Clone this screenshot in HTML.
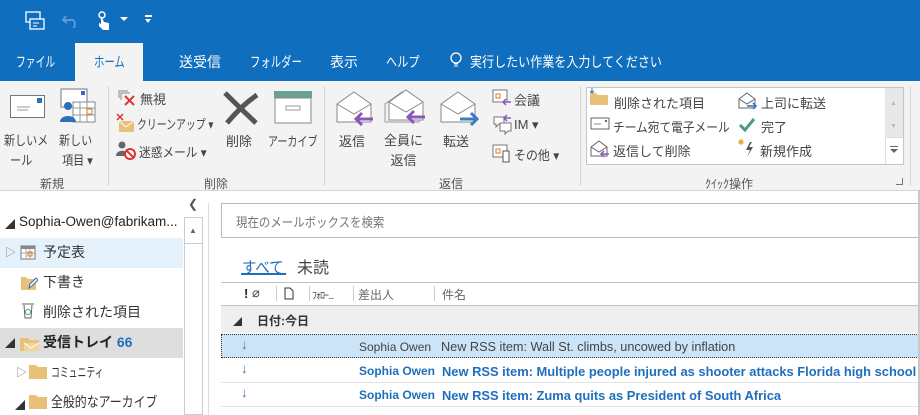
<!DOCTYPE html>
<html><head><meta charset="utf-8">
<style>
*{margin:0;padding:0;box-sizing:border-box}
body{width:920px;height:415px;overflow:hidden;background:#fff;font-family:"Liberation Sans","Noto Sans CJK JP",sans-serif;position:relative;color:#444}
.a{position:absolute;white-space:nowrap;transform-origin:0 0}
.t{font-size:13px;color:#444}
.w{color:#fff;font-size:14px}
.lbl{font-size:12px;color:#555}
.sep{position:absolute;width:1px;background:#d6d6d6}
</style></head><body>
<div class="a" style="left:0;top:0;width:920px;height:81px;background:#106ebe"></div>
<!-- QAT -->
<svg class="a" style="left:24px;top:10px" width="22" height="22" viewBox="0 0 22 22"><rect x="2" y="2" width="14" height="10" fill="none" stroke="#fff" stroke-width="1.3"/><rect x="6" y="9" width="14" height="10" fill="#106ebe" stroke="#fff" stroke-width="1.3"/><path d="M9 13h6M9 16h4" stroke="#fff"/></svg>
<svg class="a" style="left:62px;top:12px" width="18" height="16"><path d="M4 4 L1 8 L5 11 M1 8 H11 a5 5 0 0 1 0 8" fill="none" stroke="#5a9ad6" stroke-width="2"/></svg>
<svg class="a" style="left:96px;top:10px" width="16" height="22"><circle cx="6" cy="5" r="3" fill="none" stroke="#fff" stroke-width="1.5"/><path d="M5 6v8l-2-1v3l4 4h6v-7l-5-1" fill="#fff"/></svg>
<div class="a" style="left:120px;top:17px;border:4px solid transparent;border-top:4px solid #fff"></div>
<div class="a" style="left:145px;top:15px;width:7px;height:1.5px;background:#fff"></div>
<div class="a" style="left:145px;top:19px;border:3.5px solid transparent;border-top:4px solid #fff"></div>
<!-- tabs -->
<div class="a w" style="left:16px;top:52px;transform:scaleX(0.7)">ファイル</div>
<div class="a" style="left:75px;top:43px;width:68px;height:38px;background:#f3f3f3"></div>
<div class="a" style="left:94px;top:52px;font-size:14px;color:#106ebe;transform:scaleX(0.74)">ホーム</div>
<div class="a w" style="left:179px;top:52px">送受信</div>
<div class="a w" style="left:250px;top:52px;transform:scaleX(0.74)">フォルダー</div>
<div class="a w" style="left:330px;top:52px">表示</div>
<div class="a w" style="left:386px;top:52px;transform:scaleX(0.8)">ヘルプ</div>
<svg class="a" style="left:449px;top:51px" width="14" height="20"><circle cx="7" cy="7" r="5" fill="none" stroke="#fff" stroke-width="1.3"/><path d="M5 13h4M5 15h4" stroke="#fff"/></svg>
<div class="a w" style="left:470px;top:52px;transform:scaleX(0.86)">実行したい作業を入力してください</div>
<!-- ribbon -->
<div class="a" style="left:0;top:81px;width:920px;height:110px;background:#f3f3f3;border-bottom:1px solid #d6d6d6"></div>
<!-- 新規 -->
<svg class="a" style="left:10px;top:95px" width="36" height="24"><rect x="0.5" y="0.5" width="34" height="22" fill="#fff" stroke="#777"/><rect x="27" y="3" width="5" height="5" fill="#2e6fba"/><path d="M7 12h13M7 15h11" stroke="#999"/></svg>
<div class="a t" style="left:4px;top:131px;line-height:20px;transform:scaleX(0.85)">新しいメ<br>&nbsp;&nbsp;ール</div>
<svg class="a" style="left:59px;top:88px" width="38" height="36"><rect x="2" y="1" width="26" height="18" fill="#fff" stroke="#777"/><rect x="22" y="3" width="4" height="4" fill="#2e6fba"/><rect x="14" y="14" width="22" height="20" fill="#fff" stroke="#888"/><path d="M14 20h22M14 27h22M21 14v20M28 14v20" stroke="#999"/><rect x="28" y="21" width="5" height="5" fill="none" stroke="#e07a1f"/><circle cx="9" cy="18" r="4" fill="#2e6fba"/><path d="M1 34c0-8 16-8 16 0z" fill="#2e6fba"/></svg>
<div class="a t" style="left:59px;top:131px;line-height:20px;transform:scaleX(0.85)">新しい<br>&nbsp;項目 ▾</div>
<div class="a lbl" style="left:40px;top:175px">新規</div>
<div class="sep" style="left:108px;top:86px;height:100px"></div>
<!-- 削除 -->
<svg class="a" style="left:117px;top:88px" width="20" height="18"><path d="M2 10V3h9M4 12V5h9" fill="none" stroke="#888"/><path d="M8 8l9 9M17 8l-9 9" stroke="#d33" stroke-width="2"/></svg>
<div class="a t" style="left:140px;top:89px">無視</div>
<svg class="a" style="left:116px;top:113px" width="20" height="20"><rect x="3" y="8" width="15" height="11" fill="#e8c07a"/><path d="M3 8l7 6 8-6" fill="none" stroke="#fff"/><path d="M1 1l6 6M7 1l-6 6" stroke="#d33" stroke-width="1.5"/></svg>
<div class="a t" style="left:137px;top:114px;transform:scaleX(0.76)">クリーンアップ ▾</div>
<svg class="a" style="left:116px;top:140px" width="20" height="20"><circle cx="6" cy="5" r="3.5" fill="#666"/><path d="M0 16c0-7 12-7 12 0z" fill="#666"/><circle cx="14" cy="14" r="5" fill="#fff" stroke="#d33" stroke-width="2"/><path d="M11 11l6 6" stroke="#d33" stroke-width="2"/></svg>
<div class="a t" style="left:139px;top:142px;transform:scaleX(0.9)">迷惑メール ▾</div>
<svg class="a" style="left:222px;top:90px" width="38" height="36"><path d="M3 3 Q18 18 34 33" stroke="#555" stroke-width="5" fill="none"/><path d="M35 5 Q20 15 5 33" stroke="#555" stroke-width="5" fill="none"/></svg>
<div class="a t" style="left:226px;top:131px">削除</div>
<svg class="a" style="left:273px;top:90px" width="40" height="34"><rect x="1" y="1" width="38" height="7" fill="#6aa38d"/><rect x="2" y="8" width="36" height="25" fill="#fff" stroke="#888"/><rect x="13" y="16" width="14" height="4" fill="none" stroke="#999"/></svg>
<div class="a t" style="left:268px;top:131px;transform:scaleX(0.77)">アーカイブ</div>
<div class="a lbl" style="left:204px;top:175px">削除</div>
<div class="sep" style="left:324px;top:86px;height:100px"></div>
<!-- 返信 -->
<svg class="a" style="left:336px;top:90px" width="40" height="36"><path d="M1 14 L18 2 L35 14 V32 H1Z" fill="#fff" stroke="#888"/><path d="M1 14 L18 24 L35 14" fill="none" stroke="#888"/><path d="M20 29h17M26 23l-6 6 6 6" stroke="#8b58b8" stroke-width="3" fill="none"/></svg>
<div class="a t" style="left:339px;top:131px">返信</div>
<svg class="a" style="left:384px;top:88px" width="42" height="38"><path d="M1 16 L18 4 L35 16 V34 H1Z" fill="none" stroke="#999"/><path d="M5 14 L22 2 L39 14 V32 H5Z" fill="#fff" stroke="#888"/><path d="M5 14 L22 24 L39 14" fill="none" stroke="#888"/><path d="M24 29h17M30 23l-6 6 6 6" stroke="#8b58b8" stroke-width="3" fill="none"/></svg>
<div class="a t" style="left:384px;top:131px;line-height:20px;text-align:center">全員に<br>返信</div>
<svg class="a" style="left:440px;top:90px" width="40" height="36"><path d="M1 14 L18 2 L35 14 V32 H1Z" fill="#fff" stroke="#888"/><path d="M1 14 L18 24 L35 14" fill="none" stroke="#888"/><path d="M20 29h17M31 23l6 6-6 6" stroke="#3d7cc4" stroke-width="3" fill="none"/></svg>
<div class="a t" style="left:443px;top:131px">転送</div>
<svg class="a" style="left:492px;top:89px" width="20" height="18"><rect x="1" y="1" width="14" height="12" fill="#fff" stroke="#777"/><rect x="4" y="5" width="4" height="4" fill="none" stroke="#e07a1f"/><path d="M19 13h-8M14 10l-3 3 3 3" stroke="#8b58b8" stroke-width="1.5" fill="none"/></svg>
<div class="a t" style="left:514px;top:90px">会議</div>
<svg class="a" style="left:492px;top:114px" width="22" height="22"><path d="M2 3h10v7H7l-3 3v-3H2z" fill="#fff" stroke="#777"/><path d="M8 9h11v8h-3l-3 3v-3H8z" fill="#fff" stroke="#777"/><path d="M19 4h-7M15 1l-3 3 3 3" stroke="#8b58b8" stroke-width="1.5" fill="none"/></svg>
<div class="a t" style="left:514px;top:117px">IM ▾</div>
<svg class="a" style="left:492px;top:144px" width="20" height="20"><rect x="1" y="1" width="14" height="12" fill="#fff" stroke="#777"/><rect x="4" y="5" width="4" height="4" fill="none" stroke="#e07a1f"/><rect x="11" y="7" width="6" height="11" fill="#fff" stroke="#555"/></svg>
<div class="a t" style="left:514px;top:145px;transform:scaleX(0.92)">その他 ▾</div>
<div class="a lbl" style="left:439px;top:175px">返信</div>
<div class="sep" style="left:580px;top:86px;height:100px"></div>
<!-- クイック操作 -->
<div class="a" style="left:586px;top:87px;width:318px;height:78px;background:#fff;border:1px solid #c6c6c6"></div>
<div class="a" style="left:885px;top:88px;width:18px;height:76px;background:#fff;border-left:1px solid #ddd"></div>
<div class="a" style="left:885px;top:88px;width:18px;height:50px;background:#e8e8e8;border-bottom:1px solid #ddd"></div>
<div class="a" style="left:890px;top:100px;font-size:7px;color:#bbb">▲</div>
<div class="a" style="left:890px;top:123px;font-size:7px;color:#bbb">▼</div>
<div class="a" style="left:890px;top:146px;width:8px;height:1px;background:#666"></div>
<div class="a" style="left:890px;top:149px;border:4px solid transparent;border-top:4px solid #666"></div>
<svg class="a" style="left:589px;top:88px" width="20" height="18"><path d="M1 5h6l2 2h10v10H1z" fill="#e8c07a"/><path d="M3 0v4M1 3l2 2 2-2" stroke="#2e6fba" fill="none"/></svg>
<div class="a t" style="left:614px;top:93px">削除された項目</div>
<svg class="a" style="left:590px;top:117px" width="20" height="14"><rect x="1" y="1" width="18" height="11" fill="#fff" stroke="#666"/><rect x="15" y="3" width="2" height="2" fill="#2e6fba"/><path d="M4 7h7" stroke="#888"/></svg>
<div class="a t" style="left:613px;top:117px;transform:scaleX(0.9)">チーム宛て電子メール</div>
<svg class="a" style="left:590px;top:140px" width="20" height="18"><path d="M1 7 L9 1 L17 7 V16 H1Z" fill="#fff" stroke="#666"/><path d="M1 7 L9 12 L17 7" fill="none" stroke="#666"/><path d="M11 14h8M14 11l-3 3 3 3" stroke="#8b58b8" stroke-width="1.5" fill="none"/></svg>
<div class="a t" style="left:613px;top:141px">返信して削除</div>
<svg class="a" style="left:738px;top:92px" width="20" height="18"><path d="M1 7 L9 1 L17 7 V16 H1Z" fill="#fff" stroke="#666"/><path d="M1 7 L9 12 L17 7" fill="none" stroke="#666"/><path d="M9 14h9M15 11l3 3-3 3" stroke="#2e6fba" stroke-width="1.5" fill="none"/></svg>
<div class="a t" style="left:761px;top:93px">上司に転送</div>
<svg class="a" style="left:738px;top:117px" width="18" height="16"><path d="M2 8l5 5 9-11" stroke="#4e9a8a" stroke-width="3" fill="none"/></svg>
<div class="a t" style="left:761px;top:117px">完了</div>
<svg class="a" style="left:738px;top:138px" width="18" height="20"><path d="M3 1v6M0 4h6M1 2l4 4M5 2l-4 4" stroke="#e8a03a"/><path d="M12 4l-4 8h4l-3 7 6-10h-4l3-5z" fill="#555"/></svg>
<div class="a t" style="left:760px;top:141px">新規作成</div>
<div class="a lbl" style="left:705px;top:175px">ｸｲｯｸ操作</div>
<div class="a" style="left:896px;top:178px;width:7px;height:7px;border-right:1px solid #777;border-bottom:1px solid #777"></div>
<div class="sep" style="left:910px;top:86px;height:100px"></div>
<!-- nav pane -->
<div class="a" style="left:188px;top:197px;font-size:12px;color:#555">❮</div>
<div class="a" style="left:184px;top:217px;width:19px;height:198px;border:1px solid #ccc;background:#fff"></div>
<div class="a" style="left:185px;top:218px;width:17px;height:26px;border-bottom:1px solid #ccc"></div>
<div class="a" style="left:189px;top:226px;font-size:8px;color:#666">▲</div>
<div class="a" style="left:208px;top:203px;width:1px;height:212px;background:#ddd"></div>
<div class="a" style="left:5px;top:216px;font-size:10px;color:#333">◢</div>
<div class="a" style="left:19px;top:214px;font-size:13.5px;color:#222">Sophia-Owen@fabrikam...</div>
<div class="a" style="left:0;top:238px;width:183px;height:30px;background:#e5f1fb"></div>
<div class="a" style="left:5px;top:244px;font-size:11px;color:#888">▷</div>
<svg class="a" style="left:20px;top:245px" width="16" height="16"><rect x="1" y="1" width="14" height="13" fill="#fff" stroke="#777"/><rect x="1" y="1" width="14" height="3" fill="#888"/><path d="M1 8h14M6 4v10M10 4v10" stroke="#aaa"/><rect x="8" y="7" width="4" height="4" fill="none" stroke="#e07a1f"/></svg>
<div class="a" style="left:43px;top:242px;font-size:14px;color:#333">予定表</div>
<svg class="a" style="left:20px;top:273px" width="18" height="18"><path d="M1 4h5l2 2h8v11H1z" fill="#e8c07a"/><path d="M9 15l1-4 6-6 2 2-6 6z" fill="#fff" stroke="#2e6fba"/></svg>
<div class="a" style="left:43px;top:272px;font-size:14px;color:#333">下書き</div>
<svg class="a" style="left:21px;top:301px" width="14" height="18"><path d="M1 3h12M3 4l1 13h6l1-13" fill="none" stroke="#666"/><circle cx="7" cy="11" r="2.5" fill="none" stroke="#4e9a6a"/></svg>
<div class="a" style="left:43px;top:302px;font-size:14px;color:#333">削除された項目</div>
<div class="a" style="left:0;top:328px;width:183px;height:30px;background:#dedede"></div>
<div class="a" style="left:5px;top:335px;font-size:10px;color:#333">◢</div>
<svg class="a" style="left:19px;top:333px" width="22" height="20"><path d="M1 5h8l2 2h9v11H1z" fill="#e8c07a"/><path d="M5 10h15v8H5z" fill="#f0d59c"/><path d="M5 10l7 5 8-5" fill="none" stroke="#fff"/></svg>
<div class="a" style="left:43px;top:332px;font-size:14px;font-weight:bold;color:#222">受信トレイ <span style="color:#1f6fbd">66</span></div>
<div class="a" style="left:16px;top:364px;font-size:11px;color:#888">▷</div>
<svg class="a" style="left:28px;top:364px" width="20" height="16"><path d="M1 1h7l2 2h9v12H1z" fill="#e8c07a"/></svg>
<div class="a" style="left:51px;top:362px;font-size:13px;color:#333;transform:scaleX(0.68)">コミュニティ</div>
<div class="a" style="left:15px;top:397px;font-size:10px;color:#333">◢</div>
<svg class="a" style="left:28px;top:394px" width="20" height="16"><path d="M1 1h7l2 2h9v12H1z" fill="#e8c07a"/></svg>
<div class="a" style="left:51px;top:392px;font-size:14px;color:#333;transform:scaleX(0.85)">全般的なアーカイブ</div>
<!-- list -->
<div class="a" style="left:221px;top:203px;width:700px;height:35px;border:1px solid #b8b8be;border-right:none"></div>
<div class="a" style="left:236px;top:212px;font-size:13px;color:#777;transform:scaleX(0.88)">現在のメールボックスを検索</div>
<div class="a" style="left:242px;top:254px;font-size:16px;color:#1f6fbd;transform:scaleX(0.9)">すべて</div>
<div class="a" style="left:241px;top:273px;width:45px;height:2px;background:#1f6fbd"></div>
<div class="a" style="left:297px;top:254px;font-size:16px;color:#444">未読</div>
<div class="a" style="left:221px;top:282px;width:700px;height:1px;background:#c0c0c6"></div>
<div class="a" style="left:221px;top:305px;width:700px;height:1px;background:#c0c0c6"></div>
<div class="a" style="left:244px;top:286px;font-size:13px;color:#222;font-weight:bold">!</div>
<div class="a" style="left:252px;top:285px;font-size:13px;color:#444">⌀</div>
<div class="a" style="left:276px;top:286px;width:1px;height:15px;background:#ccc"></div>
<svg class="a" style="left:284px;top:287px" width="10" height="13"><path d="M1 1h5l3 3v8H1z" fill="none" stroke="#333"/></svg>
<div class="a" style="left:309px;top:286px;width:1px;height:15px;background:#ccc"></div>
<div class="a" style="left:312px;top:287px;font-size:10px;color:#444;letter-spacing:-1px">ﾌｫﾛｰ...</div>
<div class="a" style="left:353px;top:286px;width:1px;height:15px;background:#ccc"></div>
<div class="a" style="left:358px;top:286px;font-size:12px;color:#666">差出人</div>
<div class="a" style="left:434px;top:286px;width:1px;height:15px;background:#ccc"></div>
<div class="a" style="left:442px;top:286px;font-size:12px;color:#666">件名</div>
<div class="a" style="left:221px;top:306px;width:700px;height:27px;background:#efefef"></div>
<div class="a" style="left:233px;top:315px;font-size:9px;color:#333">◢</div>
<div class="a" style="left:257px;top:312px;font-size:12px;font-weight:bold;color:#333">日付:今日</div>
<div class="a" style="left:221px;top:334px;width:700px;height:24px;background:#cce4f7;border:1px dotted #333"></div>
<div class="a" style="left:221px;top:382px;width:700px;height:1px;background:#e4e4e4"></div>
<div class="a" style="left:221px;top:406px;width:700px;height:1px;background:#e4e4e4"></div>
<div class="a" style="left:241px;top:337px;font-size:13px;color:#2e6fba;font-weight:bold">↓</div>
<div class="a" style="left:241px;top:361px;font-size:13px;color:#2e6fba;font-weight:bold">↓</div>
<div class="a" style="left:241px;top:385px;font-size:13px;color:#2e6fba;font-weight:bold">↓</div>
<div class="a" style="left:359px;top:340px;font-size:12px;color:#444">Sophia Owen</div>
<div class="a" style="left:441px;top:340px;font-size:12.7px;color:#444">New RSS item: Wall St. climbs, uncowed by inflation</div>
<div class="a" style="left:359px;top:364px;font-size:12px;color:#1f6fbd;font-weight:bold">Sophia Owen</div>
<div class="a" style="left:442px;top:364px;font-size:12.9px;color:#1f6fbd;font-weight:bold">New RSS item: Multiple people injured as shooter attacks Florida high school</div>
<div class="a" style="left:359px;top:388px;font-size:12px;color:#1f6fbd;font-weight:bold">Sophia Owen</div>
<div class="a" style="left:442px;top:388px;font-size:12.9px;color:#1f6fbd;font-weight:bold">New RSS item: Zuma quits as President of South Africa</div>
<div class="a" style="left:918px;top:190px;width:2px;height:225px;background:#c8c8c8"></div>
</body></html>
